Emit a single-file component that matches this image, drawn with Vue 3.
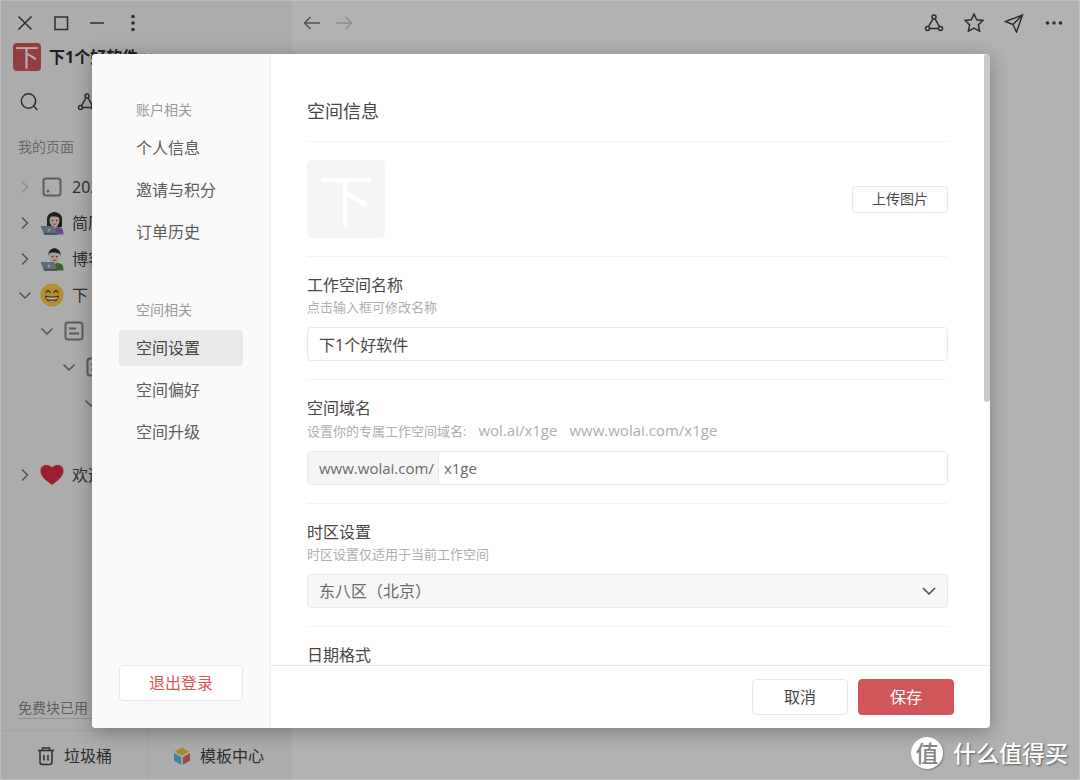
<script setup>
import { ref } from 'vue'

const spaceName = ref('下1个好软件')
const domain = ref('x1ge')
const timezone = ref('cn')

const groups = [
  { title: '账户相关', items: ['个人信息', '邀请与积分', '订单历史'] },
  { title: '空间相关', items: ['空间设置', '空间偏好', '空间升级'] },
]
const active = ref('空间设置')

const pages = [
  { text: '2021年', icon: 'blank', level: 0, open: false, faint: true },
  { text: '简历', icon: 'woman', level: 0, open: false },
  { text: '博客', icon: 'man', level: 0, open: false },
  { text: '下', icon: 'grin', level: 0, open: true },
  { text: '', icon: 'doc', level: 1, open: true },
  { text: '', icon: 'doc', level: 2, open: true },
  { text: '', icon: 'doc', level: 3, open: true },
  { text: '', icon: 'none', level: 0, open: true },
  { text: '欢迎', icon: 'heart', level: 0, open: false },
]
</script>

<template>
  <div class="page">
    <aside class="sidebar">
      <div class="window-controls">
        <button class="icon-btn" aria-label="关闭">
          <svg width="20" height="20" viewBox="0 0 20 20"><path d="M3.5 3.5l13 13M16.5 3.5l-13 13" /></svg>
        </button>
        <button class="icon-btn" aria-label="最大化">
          <svg width="20" height="20" viewBox="0 0 20 20"><rect x="4" y="4" width="12.5" height="12.5" /></svg>
        </button>
        <button class="icon-btn" aria-label="最小化">
          <svg width="20" height="20" viewBox="0 0 20 20"><path d="M3 10h14" /></svg>
        </button>
        <button class="icon-btn" aria-label="菜单">
          <svg class="solid" width="20" height="20" viewBox="0 0 20 20"><circle cx="10" cy="3.5" r="1.8" /><circle cx="10" cy="10" r="1.8" /><circle cx="10" cy="16.5" r="1.8" /></svg>
        </button>
      </div>

      <div class="space">
        <span class="space-logo">下</span>
        <strong>下1个好软件</strong>
        <svg width="12" height="12" viewBox="0 0 12 12"><path d="M2 3l4 4 4-4" /></svg>
      </div>

      <div class="tools">
        <button class="icon-btn" aria-label="搜索">
          <svg width="20" height="20" viewBox="0 0 20 20"><circle cx="9.5" cy="9" r="7.2" /><path d="M14.7 14.3l3.6 3.6" /></svg>
        </button>
        <button class="icon-btn" aria-label="关系图">
          <svg width="20" height="20" viewBox="0 0 20 20"><circle cx="10" cy="4" r="2" /><circle cx="3.5" cy="15.5" r="2" /><circle cx="16.5" cy="15.5" r="2" /><path d="M9 5.8L4.5 13.7M11 5.8l4.5 7.9M5.5 15.5h9" /></svg>
        </button>
      </div>

      <div class="section-label">我的页面</div>
      <ul class="tree">
        <li v-for="(p, i) in pages" :key="i" :class="['row', 'level-' + p.level, { faint: p.faint }]">
          <template v-if="p.icon !== 'none'">
            <svg class="chevron" width="18" height="18" viewBox="0 0 18 18">
              <path v-if="p.open" d="M3.5 6.5L9 12l5.500-5.500" />
              <path v-else d="M6 3.500L11.500 9 6 14.500" />
            </svg>
            <svg v-if="p.icon === 'blank'" class="page-icon" width="24" height="24" viewBox="0 0 24 24"><rect x="3.500" y="3.500" width="17" height="17" rx="2.500" /><circle class="dot" cx="8" cy="16" r="1.500" /></svg>
            <svg v-else-if="p.icon === 'doc'" class="page-icon" width="24" height="24" viewBox="0 0 24 24"><rect x="3.500" y="3.500" width="17" height="17" rx="2.500" /><path d="M7 9.500h7M7 14.500h10" /></svg>
            <svg v-else-if="p.icon === 'grin'" class="art" width="24" height="24" viewBox="0 0 24 24">
              <circle cx="12" cy="12" r="11.500" fill="#ffcc4d" />
              <path d="M6 9.500q2-3.500 4 0M14 9.500q2-3.500 4 0" fill="none" stroke="#664500" stroke-width="1.300" stroke-linecap="round" />
              <path d="M5 12.500q7 2 14 0c0 9-14 9-14 0z" fill="#664500" />
              <path d="M6.200 14q5.800 1.200 11.600 0l-.5 2q-5.300 1-10.600 0zM8 17.500q4 .6 8 0-4 3-8 0z" fill="#fff" />
            </svg>
            <svg v-else-if="p.icon === 'heart'" class="art" width="24" height="24" viewBox="0 0 24 24"><path d="M12 22C7 18.500.5 13.500.5 8 .5 1 9 .5 12 4.500c3-4 11.500-3.500 11.500 3.500 0 5.500-6.500 10.500-11.500 14z" fill="#dd2e44" /></svg>
            <svg v-else class="art" width="24" height="24" viewBox="0 0 24 24">
              <path v-if="p.icon === 'woman'" d="M7 16V8c0-9 15-9 15 0v8z" fill="#292f33" />
              <path d="M12 14h5v2c4 0 6.500 1 6.500 7.500H11z" :fill="p.icon === 'woman' ? '#9268ca' : '#5c913b'" />
              <path d="M11.500 12h6v3.500l-3 2.500-3-2.500z" fill="#f3d2a2" />
              <ellipse cx="14.500" cy="9.500" rx="5" ry="6" fill="#f7dece" />
              <path d="M8.500 9C7.500-1.500 21.500-1.500 20.500 9 19.500 5 16 6 13 5.500 10.500 5 9 6 8.500 9z" fill="#292f33" />
              <circle cx="12.500" cy="9.500" r=".8" fill="#662113" /><circle cx="16.600" cy="9.500" r=".8" fill="#662113" />
              <path d="M12.500 12.700h4q-2 2-4 0z" fill="#df1f32" />
              <path d="M.5 15H14l3.500 8.500H4z" fill="#8899a6" />
              <path d="M4 22h13v1.800H4z" fill="#66757f" /><circle cx="9" cy="19" r="1.500" fill="#ccd6dd" />
            </svg>
            <span>{{ p.text }}</span>
          </template>
        </li>
      </ul>

      <div class="usage">免费块已用 1000</div>
      <div class="side-footer">
        <button class="foot-btn trash">
          <svg width="20" height="20" viewBox="0 0 20 20"><path d="M2 4.500h16M6.500 4.500V2h7v2.500M4 4.500V16q0 2.500 2.500 2.500h7Q16 18.500 16 16V4.500M8 9v5.500M12 9v5.500" /></svg>
          垃圾桶
        </button>
        <button class="foot-btn">
          <svg class="art" width="20" height="20" viewBox="0 0 20 20"><path d="M10 1.500l7.200 4L10 9.700l-7.200-4.200z" fill="#efc44a" /><path d="M2 7l7.200 4.200v7.600L2 14.700z" fill="#62b6db" /><path d="M18 7l-7.200 4.200v7.600l7.200-4.100z" fill="#df6b62" /></svg>
          模板中心
        </button>
      </div>
    </aside>

    <main class="workspace">
      <header class="topbar">
        <button class="icon-btn back" aria-label="后退">
          <svg width="20" height="20" viewBox="0 0 20 20"><path d="M18 10H2.500M8.500 4l-6 6 6 6" /></svg>
        </button>
        <button class="icon-btn disabled" aria-label="前进">
          <svg width="20" height="20" viewBox="0 0 20 20"><path d="M2 10h15.500M11.500 4l6 6-6 6" /></svg>
        </button>
        <div class="actions">
          <button class="icon-btn" aria-label="关系图">
            <svg width="20" height="20" viewBox="0 0 20 20"><circle cx="10" cy="4" r="2" /><circle cx="3.500" cy="15.500" r="2" /><circle cx="16.500" cy="15.500" r="2" /><path d="M9 5.800L4.500 13.700M11 5.800l4.500 7.900M5.500 15.500h9" /></svg>
          </button>
          <button class="icon-btn" aria-label="收藏">
            <svg width="20" height="20" viewBox="0 0 20 20"><path d="M10 1l2.700 5.700 6.300.8-4.600 4.300 1.200 6.400L10 15.200l-5.600 3 1.200-6.400L1 7.500l6.300-.8z" /></svg>
          </button>
          <button class="icon-btn" aria-label="分享">
            <svg width="20" height="20" viewBox="0 0 20 20"><path d="M18.500 2L1.500 8.500l7.500 3 3.500 7.500zM18.500 2L9 11.500" /></svg>
          </button>
          <button class="icon-btn" aria-label="更多">
            <svg class="solid" width="20" height="20" viewBox="0 0 20 20"><circle cx="3.500" cy="10" r="1.800" /><circle cx="10" cy="10" r="1.800" /><circle cx="16.500" cy="10" r="1.800" /></svg>
          </button>
        </div>
      </header>
    </main>

    <div class="overlay">
      <section class="dialog" role="dialog" aria-label="空间设置">
        <nav class="nav">
          <div v-for="g in groups" :key="g.title" class="nav-group">
            <h3>{{ g.title }}</h3>
            <button v-for="item in g.items" :key="item" :class="['nav-item', { active: active === item }]" @click="active = item">{{ item }}</button>
          </div>
          <button class="btn logout">退出登录</button>
        </nav>

        <div class="panel">
          <div class="scroll">
            <form class="content" @submit.prevent>
              <h2>空间信息</h2>
              <div class="logo-row">
                <span class="big-logo">下</span>
                <button class="btn upload" type="button">上传图片</button>
              </div>
              <div class="field">
                <label for="space-name">工作空间名称</label>
                <p>点击输入框可修改名称</p>
                <input id="space-name" v-model="spaceName" class="control" type="text" />
              </div>
              <div class="field">
                <label for="space-domain">空间域名</label>
                <p>设置你的专属工作空间域名:<span class="domain">wol.ai/x1ge</span><span class="domain">www.wolai.com/x1ge</span></p>
                <div class="control joined">
                  <span class="prefix">www.wolai.com/</span>
                  <input id="space-domain" v-model="domain" type="text" />
                </div>
              </div>
              <div class="field">
                <label for="timezone">时区设置</label>
                <p>时区设置仅适用于当前工作空间</p>
                <div class="select-wrap">
                  <select id="timezone" v-model="timezone" class="control">
                    <option value="cn">东八区（北京）</option>
                  </select>
                  <svg width="16" height="16" viewBox="0 0 16 16"><path d="M2 5l6 6 6-6" /></svg>
                </div>
              </div>
              <div class="field">
                <h4>日期格式</h4>
              </div>
            </form>
            <div class="track"><div class="thumb"></div></div>
          </div>
          <footer class="dialog-footer">
            <button class="btn">取消</button>
            <button class="btn primary">保存</button>
          </footer>
        </div>
      </section>
    </div>

    <div class="watermark"><span class="badge">值</span><span>什么值得买</span></div>
  </div>
</template>

<style>
body {
  margin: 0;
}
</style>

<style scoped>
* {
  box-sizing: border-box;
}
.page {
  position: relative;
  display: flex;
  height: 100vh;
  overflow: hidden;
  background: #fff;
  color: #454040;
  font-family: "Open Sans", "Noto Sans CJK SC", sans-serif;
  font-size: 16px;
  line-height: 24px;
}
h2, h3, h4, p, ul {
  margin: 0;
  padding: 0;
  font-weight: 400;
}
button, input, select {
  margin: 0;
  padding: 0;
  border: 0;
  background: none;
  color: inherit;
  font: inherit;
}
svg {
  flex: none;
  display: block;
  fill: none;
  stroke: currentColor;
  stroke-width: 1.5;
}
svg.solid {
  fill: currentColor;
  stroke: none;
}
svg.art {
  stroke: none;
}
.icon-btn {
  width: 20px;
  height: 20px;
}

/* sidebar */
.sidebar {
  display: flex;
  flex-direction: column;
  flex: none;
  width: 292px;
  padding-top: 13px;
  background: #f7f7f7;
}
.window-controls {
  display: flex;
  gap: 16px;
  padding-left: 15px;
}
.space {
  display: flex;
  align-items: center;
  gap: 8px;
  height: 28px;
  margin-top: 10px;
  padding-left: 13px;
}
.space strong {
  color: #302b2a;
  font-weight: 700;
}
.space svg {
  margin-left: -4px;
}
.space-logo {
  width: 28px;
  height: 28px;
  border-radius: 4px;
  background: #d6575b;
  color: #fff;
  font-size: 24px;
  line-height: 28px;
  text-align: center;
}
.tools {
  display: flex;
  gap: 38px;
  margin-top: 21px;
  padding-left: 19px;
}
.section-label {
  margin-top: 25px;
  padding-left: 18px;
  color: #9a9494;
  font-size: 14px;
  line-height: 20px;
}
.tree {
  margin-top: 12px;
  list-style: none;
}
.row {
  display: flex;
  align-items: center;
  height: 36px;
  padding-left: 16px;
}
.level-1 {
  padding-left: 38px;
}
.level-2 {
  padding-left: 60px;
}
.level-3 {
  padding-left: 82px;
}
.chevron {
  margin-right: 6px;
  color: #7a7270;
}
.page-icon {
  color: #8a8280;
  stroke-width: 2;
}
.faint .chevron {
  color: #ccc;
}
.dot {
  fill: currentColor;
  stroke: none;
}
.row span {
  margin-left: 8px;
  white-space: nowrap;
}
.usage {
  align-self: flex-start;
  width: 256px;
  margin: auto 18px 11px;
  border-bottom: 1px solid #d2d2d2;
  color: #8a8684;
  font-size: 14px;
  line-height: 20px;
}
.side-footer {
  display: flex;
  height: 50px;
  border-top: 1px solid #eaeaea;
}
.foot-btn {
  display: flex;
  flex: 1;
  align-items: center;
  gap: 8px;
  padding-left: 24px;
}
.trash {
  flex: none;
  width: 148px;
  padding-left: 36px;
  border-right: 1px solid #eaeaea;
}

/* workspace */
.workspace {
  flex: 1;
}
.topbar {
  display: flex;
  gap: 12px;
  padding: 13px 16px 0 10px;
}
.back {
  color: #777;
}
.disabled {
  color: #ccc;
}
.actions {
  display: flex;
  gap: 20px;
  margin-left: auto;
}

/* dialog */
.overlay {
  position: absolute;
  inset: 0;
  display: flex;
  padding: 53px 89px 51px 91px;
  border: 1px solid rgba(255, 255, 255, 0.2);
  background: rgba(0, 0, 0, 0.3);
}
.dialog {
  display: flex;
  flex: 1;
  min-width: 0;
  overflow: hidden;
  border-radius: 4px;
  background: #fff;
  box-shadow: 0 4px 20px rgba(0, 0, 0, 0.3);
  color: #4a4645;
}
.nav {
  display: flex;
  flex-direction: column;
  flex: none;
  width: 179px;
  padding: 46px 27px 27px;
  border-right: 1px solid #eee;
  background: #fafafa;
}
.nav-group {
  display: flex;
  flex-direction: column;
  gap: 6px;
  margin-bottom: 50px;
}
.nav-group h3 {
  margin-bottom: 4px;
  padding-left: 17px;
  color: #999;
  font-size: 14px;
  line-height: 20px;
}
.nav-item {
  height: 36px;
  padding-left: 17px;
  border-radius: 4px;
  color: #5c5c5c;
  text-align: left;
}
.nav-item.active {
  background: #e9e9e9;
  color: #444;
}
.btn {
  height: 36px;
  border: 1px solid #e8e8e8;
  border-radius: 4px;
  background: #fff;
}
.logout {
  margin-top: auto;
  color: #d6575b;
}
.panel {
  display: flex;
  flex: 1;
  flex-direction: column;
  min-width: 0;
}
.scroll {
  display: flex;
  flex: 1;
  min-height: 0;
  overflow: hidden;
}
.content {
  flex: 1;
  min-width: 0;
  padding: 43px 36px 0;
}
.track {
  flex: none;
  width: 6px;
}
.thumb {
  height: 57%;
  border-radius: 3px;
  background: #c9c9c9;
}
h2 {
  padding-bottom: 16px;
  border-bottom: 1px solid #f3f3f3;
  font-size: 18px;
  line-height: 28px;
}
.logo-row {
  display: flex;
  align-items: center;
  justify-content: space-between;
  padding: 18px 0;
  border-bottom: 1px solid #f3f3f3;
}
.big-logo {
  width: 78px;
  height: 78px;
  border-radius: 5px;
  background: #f6f4f5;
  color: #fff;
  font-size: 56px;
  line-height: 78px;
  text-align: center;
}
.upload {
  width: 96px;
  height: 27px;
  font-size: 14px;
  line-height: 20px;
}
.field {
  padding: 18px 0;
  border-bottom: 1px solid #f3f3f3;
}
.field label,
.field h4 {
  display: block;
  line-height: 20px;
}
.field p {
  margin: 2px 0 10px;
  color: #b0adac;
  font-size: 13px;
  line-height: 20px;
}
.domain {
  margin-left: 12px;
  font-size: 15px;
}
.control {
  display: block;
  width: 100%;
  height: 34px;
  padding: 0 11px;
  border: 1px solid #e9e9e9;
  border-radius: 4px;
  outline: none;
}
.joined {
  display: flex;
  padding: 0;
  overflow: hidden;
  color: #6c6867;
  font-size: 15px;
}
.prefix {
  flex: none;
  padding: 0 4px 0 11px;
  border-right: 1px solid #e9e9e9;
  background: #f5f5f5;
  line-height: 32px;
}
.joined input {
  flex: 1;
  min-width: 0;
  padding-left: 5px;
  outline: none;
}
.select-wrap {
  position: relative;
}
.select-wrap select {
  appearance: none;
  background: #f7f7f5;
  color: #6c6867;
}
.select-wrap svg {
  position: absolute;
  top: 9px;
  right: 11px;
  pointer-events: none;
}
.dialog-footer {
  display: flex;
  justify-content: flex-end;
  gap: 10px;
  padding: 13px 36px 13px;
  border-top: 1px solid #e8e8e8;
}
.dialog-footer .btn {
  width: 96px;
}
.dialog-footer .primary {
  border-color: #d0565a;
  background: #d0565a;
  color: #fff;
}

/* watermark */
.watermark {
  position: absolute;
  right: 12px;
  bottom: 11px;
  display: flex;
  align-items: center;
  gap: 10px;
  color: #fff;
  font-size: 23px;
  font-weight: 500;
  line-height: 32px;
  text-shadow: 1px 1px 2px rgba(0, 0, 0, 0.5);
}
.badge {
  width: 32px;
  height: 32px;
  border-radius: 50%;
  background: #fff;
  box-shadow: 1px 1px 2px rgba(0, 0, 0, 0.3);
  color: #858585;
  text-align: center;
  text-shadow: none;
}
</style>
